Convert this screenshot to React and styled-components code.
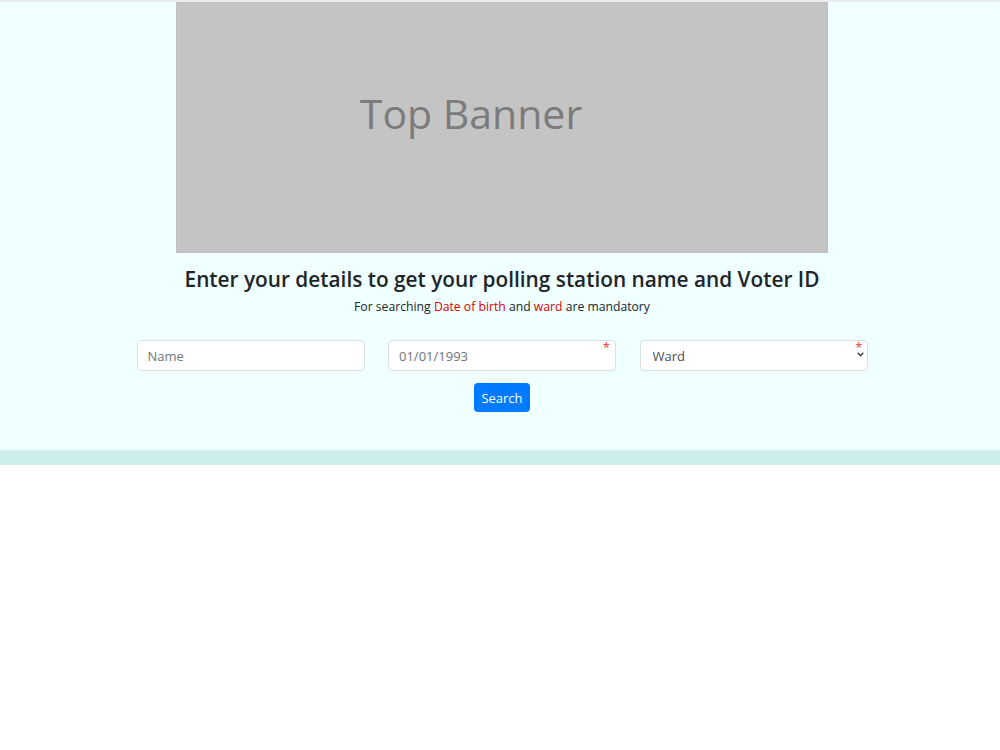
import React from "react";
import styled, { createGlobalStyle } from "styled-components";

const Global = createGlobalStyle`
  html, body { margin: 0; padding: 0; background: #ffffff; }
  body { font-family: "Open Sans", "Noto Sans", sans-serif; color: #212529; }
  * { box-sizing: border-box; }
`;

const TopLine = styled.div`
  height: 2px;
  background: #e8ecec;
`;

const Section = styled.section`
  background: #f0ffff;
  padding: 0 0 38px 4px;
  display: flex;
  flex-direction: column;
  align-items: center;
`;

const Banner = styled.div`
  width: 652px;
  height: 251px;
  background: #c4c4c4;
  border: 1px solid #bfbfbf;
  display: flex;
  align-items: center;
  justify-content: center;
  padding: 0 62px 30px 0;
  color: #7b7b7b;
  font-size: 41px;
  font-family: "Open Sans", sans-serif;
`;

const Heading = styled.h4`
  margin: 13px 0 0;
  font-size: 20.8px;
  font-weight: 600;
  line-height: 1.3;
  color: #212529;
`;

const Note = styled.p`
  margin: 5px 0 0;
  font-size: 12.2px;
  color: #212529;
`;

const Red = styled.span`
  color: #e00000;
`;

const FieldRow = styled.div`
  margin-top: 25px;
  display: grid;
  grid-template-columns: repeat(3, 228px);
  column-gap: 23.5px;
`;

const Field = styled.div`
  position: relative;
`;

const Input = styled.input`
  width: 100%;
  height: 31px;
  padding: 4px 10px;
  font-size: 13px;
  font-family: inherit;
  color: #495057;
  background: #ffffff;
  border: 1px solid #d8e2e2;
  border-radius: 4px;
  outline: none;
  &::placeholder { color: #6c757d; }
`;

const Select = styled.select`
  width: 100%;
  height: 31px;
  padding: 4px 12px;
  font-size: 13px;
  font-family: inherit;
  color: #495057;
  background: #ffffff;
  border: 1px solid #d8e2e2;
  border-radius: 4px;
  outline: none;
  appearance: none;
`;

const Star = styled.span`
  position: absolute;
  top: 1px;
  right: ${(p) => p.$right}px;
  color: #e53935;
  font-size: 13px;
  line-height: 1;
`;

const Chevron = styled.svg`
  position: absolute;
  right: 4px;
  top: 12px;
  width: 7px;
  height: 5px;
  pointer-events: none;
`;

const Button = styled.button`
  margin-top: 12px;
  height: 29px;
  padding: 0 7px;
  background: #007bff;
  color: #ffffff;
  border: none;
  border-radius: 4px;
  font-size: 13px;
  font-family: inherit;
`;

const Band = styled.div`
  height: 15px;
  background: #cdeeed;
`;

export default function App() {
  return (
    <>
      <Global />
      <TopLine />
      <Section>
        <Banner>Top Banner</Banner>
        <Heading>Enter your details to get your polling station name and Voter ID</Heading>
        <Note>
          For searching <Red>Date of birth</Red> and <Red>ward</Red> are mandatory
        </Note>
        <FieldRow>
          <Field>
            <Input placeholder="Name" />
          </Field>
          <Field>
            <Input placeholder="01/01/1993" />
            <Star $right={6}>*</Star>
          </Field>
          <Field>
            <Select defaultValue="">
              <option value="">Ward</option>
            </Select>
            <Star $right={5}>*</Star>
            <Chevron viewBox="0 0 7 5">
              <path d="M0.7 0.8 L3.5 3.8 L6.3 0.8" fill="none" stroke="#343a40" strokeWidth="1.3" />
            </Chevron>
          </Field>
        </FieldRow>
        <Button>Search</Button>
      </Section>
      <Band />
    </>
  );
}
